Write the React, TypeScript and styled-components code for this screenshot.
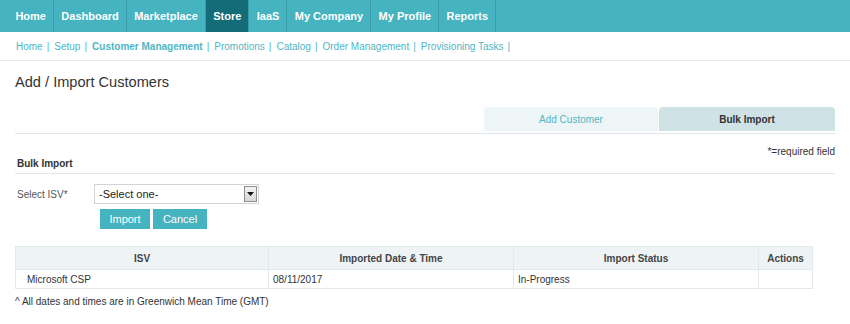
import styled, { createGlobalStyle } from "styled-components";

const GlobalStyle = createGlobalStyle`
  body {
    margin: 0;
    background: #fff;
    font-family: "Liberation Sans", Arial, sans-serif;
    color: #333;
  }
`;

const TopNav = styled.nav`
  display: flex;
  height: 32px;
  background: #45b3c0;
  padding-left: 8px;
`;

const NavItem = styled.div<{ active?: boolean }>`
  padding: 0 7px 0 7.4px;
  line-height: 32px;
  font-size: 11px;
  font-weight: bold;
  color: #fff;
  border-right: 1px solid #3a9ba7;
  background: ${({ active }) => (active ? "#146c78" : "transparent")};
`;

const Breadcrumbs = styled.div`
  display: flex;
  align-items: center;
  height: 28px;
  padding-left: 16px;
  border-bottom: 1px solid #e1ebed;
  font-size: 10px;
  color: #4fb6c3;
`;

const Crumb = styled.span<{ current?: boolean }>`
  font-weight: ${({ current }) => (current ? "bold" : "normal")};
`;

const Sep = styled.span`
  margin: 0 5px 0 4px;
`;

const Content = styled.div`
  padding: 0 15px;
`;

const Title = styled.h1`
  margin: 12px 0 0;
  font-size: 14.6px;
  line-height: 18px;
  font-weight: normal;
  color: #333;
`;

const TabBar = styled.div`
  display: flex;
  justify-content: flex-end;
  gap: 1px;
  margin-top: 16px;
  padding-bottom: 2px;
  border-bottom: 1px solid #dde8ea;
`;

const Tab = styled.div<{ active?: boolean; w: number }>`
  width: ${({ w }) => w}px;
  height: 24px;
  line-height: 25px;
  text-align: center;
  font-size: 10px;
  border-radius: 4px 4px 0 0;
  background: ${({ active }) => (active ? "#cfe2e5" : "#eef5f6")};
  color: ${({ active }) => (active ? "#333" : "#4fb6c3")};
  font-weight: ${({ active }) => (active ? "bold" : "normal")};
`;

const Required = styled.div`
  margin-top: 12px;
  text-align: right;
  font-size: 10px;
  line-height: 12px;
`;

const SectionTitle = styled.div`
  padding: 0 0 3px 2px;
  font-size: 10px;
  line-height: 12px;
  font-weight: bold;
  border-bottom: 1px solid #dde8ea;
`;

const FormRow = styled.div`
  display: flex;
  align-items: center;
  margin-top: 10px;
`;

const Label = styled.label`
  width: 77px;
  padding-left: 2px;
  font-size: 10px;
  color: #555;
`;

const SelectBox = styled.div`
  display: flex;
  align-items: center;
  justify-content: space-between;
  box-sizing: border-box;
  width: 165px;
  height: 20px;
  padding: 0 1px 0 4px;
  border: 1px solid #d4d4d4;
  font-size: 11px;
  color: #222;
`;

const ArrowButton = styled.span`
  display: flex;
  align-items: center;
  justify-content: center;
  box-sizing: border-box;
  width: 13px;
  height: 16px;
  border: 1px solid #8d8d8d;
  background: linear-gradient(#f4f4f4, #d6d6d6);
`;

const ButtonRow = styled.div`
  display: flex;
  gap: 3px;
  margin: 5px 0 0 85px;
`;

const Button = styled.button<{ w: number }>`
  width: ${({ w }) => w}px;
  height: 20px;
  padding: 0;
  border: none;
  background: #45b3c0;
  color: #fff;
  font-family: inherit;
  font-size: 11px;
`;

const Table = styled.table`
  margin-top: 17px;
  width: 797px;
  border-collapse: collapse;
  font-size: 10px;
  table-layout: fixed;
`;

const Th = styled.th<{ w: number }>`
  width: ${({ w }) => w}px;
  height: 22px;
  padding: 0;
  background: #eef4f6;
  border: 1px solid #e2eaec;
  color: #444;
  font-weight: bold;
  text-align: center;
`;

const Td = styled.td<{ first?: boolean }>`
  height: 18px;
  padding: 0 0 0 ${({ first }) => (first ? 11 : 4)}px;
  border: 1px solid #e2eaec;
  color: #333;
`;

const Note = styled.div`
  margin-top: 7px;
  font-size: 10px;
  line-height: 12px;
`;

const navItems = ["Home", "Dashboard", "Marketplace", "Store", "IaaS", "My Company", "My Profile", "Reports"];
const crumbs = ["Home", "Setup", "Customer Management", "Promotions", "Catalog", "Order Management", "Provisioning Tasks"];

export default function App() {
  return (
    <>
      <GlobalStyle />
      <TopNav>
        {navItems.map((n) => (
          <NavItem key={n} active={n === "Store"}>
            {n}
          </NavItem>
        ))}
      </TopNav>
      <Breadcrumbs>
        {crumbs.map((c) => (
          <span key={c}>
            <Crumb current={c === "Customer Management"}>{c}</Crumb>
            <Sep>|</Sep>
          </span>
        ))}
      </Breadcrumbs>
      <Content>
        <Title>Add / Import Customers</Title>
        <TabBar>
          <Tab w={174}>Add Customer</Tab>
          <Tab w={176} active>
            Bulk Import
          </Tab>
        </TabBar>
        <Required>*=required field</Required>
        <SectionTitle>Bulk Import</SectionTitle>
        <FormRow>
          <Label>Select ISV*</Label>
          <SelectBox>
            <span>-Select one-</span>
            <ArrowButton>
              <svg width="7" height="4" viewBox="0 0 7 4">
                <path d="M0 0h7L3.5 4z" fill="#111" />
              </svg>
            </ArrowButton>
          </SelectBox>
        </FormRow>
        <ButtonRow>
          <Button w={50}>Import</Button>
          <Button w={54}>Cancel</Button>
        </ButtonRow>
        <Table>
          <thead>
            <tr>
              <Th w={252}>ISV</Th>
              <Th w={244}>Imported Date &amp; Time</Th>
              <Th w={244}>Import Status</Th>
              <Th w={53}>Actions</Th>
            </tr>
          </thead>
          <tbody>
            <tr>
              <Td first>Microsoft CSP</Td>
              <Td>08/11/2017</Td>
              <Td>In-Progress</Td>
              <Td />
            </tr>
          </tbody>
        </Table>
        <Note>^ All dates and times are in Greenwich Mean Time (GMT)</Note>
      </Content>
    </>
  );
}
